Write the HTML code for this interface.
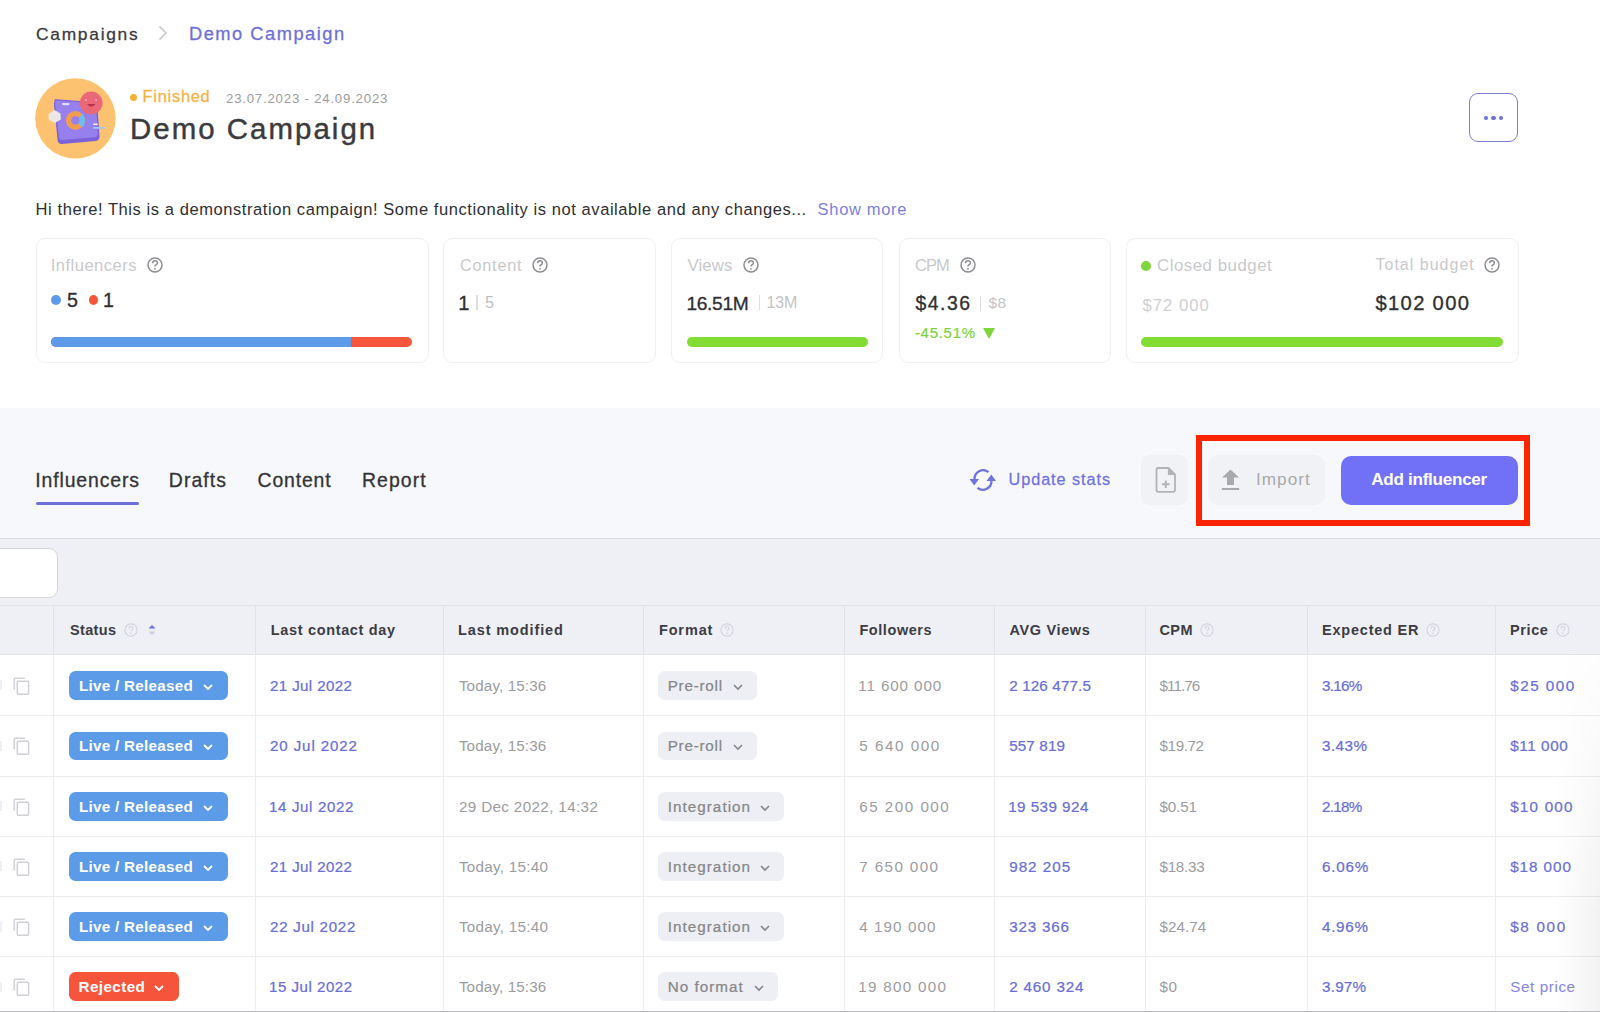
<!DOCTYPE html>
<html><head><meta charset="utf-8">
<style>
html,body{margin:0;padding:0;width:1600px;height:1012px;overflow:hidden;background:#fff;}
body{position:relative;font-family:"Liberation Sans",sans-serif;}
.t{position:absolute;white-space:nowrap;line-height:1;}
.a{position:absolute;box-sizing:border-box;}
svg{position:absolute;overflow:visible;}
</style></head><body>
<svg style="left:35px;top:78px" width="81" height="81" viewBox="0 0 81 81">
<circle cx="40.4" cy="40.4" r="40.2" fill="#fdc26f"/>
<path d="M20 23 Q18 21.5 21 21.3 L58 24 Q62 24.4 62.4 28.5 L64.5 58 Q64.8 62.5 60.5 63 L27 66 Q23 66.3 22.6 62 L19 27 Q18.7 23.5 20 23Z" fill="#7c62d6"/>
<path d="M21.5 22.5 L57.5 25 Q61 25.3 61.2 29 L62.6 55.5 Q62.8 59 59.3 59.3 L27.5 62 Q24.3 62.2 24 59 L20.3 26.5 Q20 22.4 21.5 22.5Z" fill="#9580ee"/>
<circle cx="40.4" cy="42.4" r="6.8" fill="none" stroke="#f39b4f" stroke-width="5.4"/>
<path d="M45.5 37.8 A6.8 6.8 0 0 1 45 47.5" fill="none" stroke="#6cc0ea" stroke-width="5.4"/>
<polygon points="13.5,36 19.6,32 25.5,35.5 25.8,41.5 19.8,45 13.8,41.8" fill="#ece7e6"/>
<circle cx="56.2" cy="25" r="11.4" fill="#ea6878"/>
<path d="M52 26 Q56.2 31.5 60.4 26Z" fill="#b43350"/>
<circle cx="51" cy="22" r="0.9" fill="#f7b0b8"/><circle cx="61" cy="22" r="0.9" fill="#f7b0b8"/>
<rect x="27" y="25" width="7.5" height="2.2" rx="1.1" fill="#e4dcff"/>
<rect x="58" y="49" width="12" height="1.8" rx="0.9" fill="#9ec8f0"/>
<rect x="58" y="45.5" width="5" height="1.5" rx="0.7" fill="#f7efe0"/>
</svg>
<div class="a" style="left:130px;top:93.5px;width:7px;height:7px;border-radius:50%;background:#f5b135"></div>
<div class="a" style="left:1469px;top:93px;width:49px;height:49px;border:1.5px solid #7a7ed8;border-radius:9px"></div>
<div class="a" style="left:1483.8px;top:116.1px;width:4.4px;height:4.4px;border-radius:50%;background:#6b6fd8"></div>
<div class="a" style="left:1491.3px;top:116.1px;width:4.4px;height:4.4px;border-radius:50%;background:#6b6fd8"></div>
<div class="a" style="left:1498.8px;top:116.1px;width:4.4px;height:4.4px;border-radius:50%;background:#6b6fd8"></div>
<svg style="left:157px;top:25px" width="12" height="16" viewBox="0 0 12 16"><path d="M2.5 1.5 L9 8 L2.5 14.5" fill="none" stroke="#c5c5cc" stroke-width="1.6"/></svg>
<div class="a" style="left:35.5px;top:237.5px;width:393.0px;height:125px;border:1px solid #f0f0f2;border-radius:9px"></div>
<div class="a" style="left:443px;top:237.5px;width:212.5px;height:125px;border:1px solid #f0f0f2;border-radius:9px"></div>
<div class="a" style="left:670.5px;top:237.5px;width:212.5px;height:125px;border:1px solid #f0f0f2;border-radius:9px"></div>
<div class="a" style="left:898.5px;top:237.5px;width:212.0px;height:125px;border:1px solid #f0f0f2;border-radius:9px"></div>
<div class="a" style="left:1126px;top:237.5px;width:392.5px;height:125px;border:1px solid #f0f0f2;border-radius:9px"></div>
<svg style="left:146.8px;top:257.0px" width="16" height="16" viewBox="0 0 16 16">
<circle cx="8" cy="8" r="7" fill="none" stroke="#8e8e92" stroke-width="1.5"/>
<path d="M5.6 6.2 Q5.6 3.8 8 3.8 Q10.4 3.8 10.4 6 Q10.4 7.3 8.8 8 Q8 8.4 8 9.6" fill="none" stroke="#8e8e92" stroke-width="1.5"/>
<circle cx="8" cy="11.8" r="0.9" fill="#8e8e92"/></svg>
<svg style="left:532.2px;top:257.0px" width="16" height="16" viewBox="0 0 16 16">
<circle cx="8" cy="8" r="7" fill="none" stroke="#8e8e92" stroke-width="1.5"/>
<path d="M5.6 6.2 Q5.6 3.8 8 3.8 Q10.4 3.8 10.4 6 Q10.4 7.3 8.8 8 Q8 8.4 8 9.6" fill="none" stroke="#8e8e92" stroke-width="1.5"/>
<circle cx="8" cy="11.8" r="0.9" fill="#8e8e92"/></svg>
<svg style="left:742.6px;top:257.0px" width="16" height="16" viewBox="0 0 16 16">
<circle cx="8" cy="8" r="7" fill="none" stroke="#8e8e92" stroke-width="1.5"/>
<path d="M5.6 6.2 Q5.6 3.8 8 3.8 Q10.4 3.8 10.4 6 Q10.4 7.3 8.8 8 Q8 8.4 8 9.6" fill="none" stroke="#8e8e92" stroke-width="1.5"/>
<circle cx="8" cy="11.8" r="0.9" fill="#8e8e92"/></svg>
<svg style="left:959.8px;top:257.0px" width="16" height="16" viewBox="0 0 16 16">
<circle cx="8" cy="8" r="7" fill="none" stroke="#8e8e92" stroke-width="1.5"/>
<path d="M5.6 6.2 Q5.6 3.8 8 3.8 Q10.4 3.8 10.4 6 Q10.4 7.3 8.8 8 Q8 8.4 8 9.6" fill="none" stroke="#8e8e92" stroke-width="1.5"/>
<circle cx="8" cy="11.8" r="0.9" fill="#8e8e92"/></svg>
<svg style="left:1484.4px;top:257.0px" width="16" height="16" viewBox="0 0 16 16">
<circle cx="8" cy="8" r="7" fill="none" stroke="#8e8e92" stroke-width="1.5"/>
<path d="M5.6 6.2 Q5.6 3.8 8 3.8 Q10.4 3.8 10.4 6 Q10.4 7.3 8.8 8 Q8 8.4 8 9.6" fill="none" stroke="#8e8e92" stroke-width="1.5"/>
<circle cx="8" cy="11.8" r="0.9" fill="#8e8e92"/></svg>
<div class="a" style="left:51px;top:295px;width:10px;height:10px;border-radius:50%;background:#5c9be7"></div>
<div class="a" style="left:88.5px;top:295px;width:9.5px;height:10px;border-radius:50%;background:#f5563b"></div>
<div class="a" style="left:1141px;top:260.5px;width:10px;height:10px;border-radius:50%;background:#7fd63a"></div>
<div class="a" style="left:476.25px;top:295px;width:1.5px;height:15px;background:#dedee0"></div>
<div class="a" style="left:758.85px;top:295px;width:1.5px;height:15px;background:#dedee0"></div>
<div class="a" style="left:979.85px;top:296px;width:1.5px;height:15px;background:#dedee0"></div>
<svg style="left:982.5px;top:328px" width="12" height="11" viewBox="0 0 12 11"><path d="M0 0 L12 0 L6 11Z" fill="#7ed43a"/></svg>
<div class="a" style="left:50.8px;top:336.5px;width:361.7px;height:10px;border-radius:5px;background:#f6573c;overflow:hidden"><div style="width:300.6px;height:10px;background:#5d9be8"></div></div>
<div class="a" style="left:687px;top:336.5px;width:180.5px;height:10px;border-radius:5px;background:#82dc34"></div>
<div class="a" style="left:1141px;top:336.5px;width:361.5px;height:10px;border-radius:5px;background:#82dc34"></div>
<div class="a" style="left:0;top:408px;width:1600px;height:130px;background:#f7f8fc"></div>
<div class="a" style="left:0;top:538px;width:1600px;height:1px;background:#dcdde2"></div>
<div class="a" style="left:0;top:539px;width:1600px;height:473px;background:#eff0f5"></div>
<div class="a" style="left:35.5px;top:502px;width:103px;height:3px;border-radius:1.5px;background:#6d70d8"></div>
<svg style="left:969px;top:469px" width="28" height="22" viewBox="0 0 28 22">
<path d="M19.5 3.2 A8.5 8.5 0 0 0 5.6 10.5" fill="none" stroke="#6f73db" stroke-width="2.3"/>
<path d="M0.5 10 L10 10 L5.2 16.5Z" fill="#6f73db"/>
<path d="M8.5 18.8 A8.5 8.5 0 0 0 22.4 11.5" fill="none" stroke="#6f73db" stroke-width="2.3"/>
<path d="M17.5 12 L27 12 L22.3 5.5Z" fill="#6f73db"/>
</svg>
<div class="a" style="left:1140.5px;top:455px;width:47px;height:49.5px;border-radius:9px;background:#f1f2f6"></div>
<svg style="left:1155px;top:467px" width="22" height="26" viewBox="0 0 22 26">
<path d="M2.5 1 L13.5 1 L20 7.5 L20 23 Q20 24.8 18.2 24.8 L3.3 24.8 Q1.5 24.8 1.5 23 L1.5 2.8 Q1.5 1 3.3 1Z" fill="none" stroke="#b3b3b6" stroke-width="1.8" stroke-linejoin="round"/>
<path d="M13.5 1 L13.5 7.5 L20 7.5" fill="#b3b3b6" stroke="#b3b3b6" stroke-width="1.2" stroke-linejoin="round"/>
<path d="M10.8 13.5 L10.8 21 M7 17.2 L14.6 17.2" stroke="#b3b3b6" stroke-width="2"/>
</svg>
<div class="a" style="left:1208px;top:455px;width:116.5px;height:49.5px;border-radius:10px;background:#f1f2f6"></div>
<svg style="left:1221px;top:469px" width="19" height="22" viewBox="0 0 19 22">
<path d="M9.5 0.5 L18 8.5 L13 8.5 L13 16 L6 16 L6 8.5 L1 8.5Z" fill="#a9a9ac"/>
<rect x="0.8" y="19" width="17.4" height="2" fill="#a9a9ac"/>
</svg>
<div class="a" style="left:1341px;top:455.7px;width:177px;height:49px;border-radius:10px;background:#7071f7"></div>
<div class="a" style="left:1196px;top:434.5px;width:334px;height:91px;border:6.6px solid #fb2400"></div>
<div class="a" style="left:-10px;top:548px;width:67.5px;height:50px;border:1.2px solid #d6d7dc;border-radius:9px;background:#fff"></div>
<div class="a" style="left:0;top:605px;width:1600px;height:1px;background:#e3e4e9"></div>
<div class="a" style="left:0;top:654px;width:1600px;height:358px;background:#fff"></div>
<div class="a" style="left:0;top:653.5px;width:1600px;height:1px;background:#e2e3e8"></div>
<div class="a" style="left:53.0px;top:606px;width:1px;height:48px;background:#e2e3e8"></div>
<div class="a" style="left:53.0px;top:654px;width:1px;height:357px;background:#ededf0"></div>
<div class="a" style="left:254.5px;top:606px;width:1px;height:48px;background:#e2e3e8"></div>
<div class="a" style="left:254.5px;top:654px;width:1px;height:357px;background:#ededf0"></div>
<div class="a" style="left:443.0px;top:606px;width:1px;height:48px;background:#e2e3e8"></div>
<div class="a" style="left:443.0px;top:654px;width:1px;height:357px;background:#ededf0"></div>
<div class="a" style="left:643.0px;top:606px;width:1px;height:48px;background:#e2e3e8"></div>
<div class="a" style="left:643.0px;top:654px;width:1px;height:357px;background:#ededf0"></div>
<div class="a" style="left:843.5px;top:606px;width:1px;height:48px;background:#e2e3e8"></div>
<div class="a" style="left:843.5px;top:654px;width:1px;height:357px;background:#ededf0"></div>
<div class="a" style="left:994.0px;top:606px;width:1px;height:48px;background:#e2e3e8"></div>
<div class="a" style="left:994.0px;top:654px;width:1px;height:357px;background:#ededf0"></div>
<div class="a" style="left:1144.5px;top:606px;width:1px;height:48px;background:#e2e3e8"></div>
<div class="a" style="left:1144.5px;top:654px;width:1px;height:357px;background:#ededf0"></div>
<div class="a" style="left:1307.0px;top:606px;width:1px;height:48px;background:#e2e3e8"></div>
<div class="a" style="left:1307.0px;top:654px;width:1px;height:357px;background:#ededf0"></div>
<div class="a" style="left:1495.0px;top:606px;width:1px;height:48px;background:#e2e3e8"></div>
<div class="a" style="left:1495.0px;top:654px;width:1px;height:357px;background:#ededf0"></div>
<div class="a" style="left:0;top:715.0px;width:1600px;height:1px;background:#ededf0"></div>
<div class="a" style="left:0;top:775.5px;width:1600px;height:1px;background:#ededf0"></div>
<div class="a" style="left:0;top:835.8px;width:1600px;height:1px;background:#ededf0"></div>
<div class="a" style="left:0;top:896.0px;width:1600px;height:1px;background:#ededf0"></div>
<div class="a" style="left:0;top:956.0px;width:1600px;height:1px;background:#ededf0"></div>
<div class="a" style="left:0;top:1011px;width:1600px;height:1px;background:#b9b9bb"></div>
<svg style="left:123.5px;top:623px" width="14" height="14" viewBox="0 0 16 16">
<circle cx="8" cy="8" r="7" fill="none" stroke="#d3d4de" stroke-width="1.3"/>
<path d="M5.8 6.2 Q5.8 4 8 4 Q10.2 4 10.2 6 Q10.2 7.2 8.8 7.9 Q8 8.3 8 9.5" fill="none" stroke="#d3d4de" stroke-width="1.3"/>
<circle cx="8" cy="11.8" r="0.9" fill="#d3d4de"/></svg>
<svg style="left:148px;top:625px" width="8" height="10" viewBox="0 0 8 10"><path d="M0.5 3.5 L4 0 L7.5 3.5Z" fill="#6d70d8"/><path d="M0.5 6.5 L4 10 L7.5 6.5Z" fill="#cdcde0"/></svg>
<svg style="left:720px;top:623px" width="14" height="14" viewBox="0 0 16 16">
<circle cx="8" cy="8" r="7" fill="none" stroke="#d3d4de" stroke-width="1.3"/>
<path d="M5.8 6.2 Q5.8 4 8 4 Q10.2 4 10.2 6 Q10.2 7.2 8.8 7.9 Q8 8.3 8 9.5" fill="none" stroke="#d3d4de" stroke-width="1.3"/>
<circle cx="8" cy="11.8" r="0.9" fill="#d3d4de"/></svg>
<svg style="left:1200px;top:623px" width="14" height="14" viewBox="0 0 16 16">
<circle cx="8" cy="8" r="7" fill="none" stroke="#d3d4de" stroke-width="1.3"/>
<path d="M5.8 6.2 Q5.8 4 8 4 Q10.2 4 10.2 6 Q10.2 7.2 8.8 7.9 Q8 8.3 8 9.5" fill="none" stroke="#d3d4de" stroke-width="1.3"/>
<circle cx="8" cy="11.8" r="0.9" fill="#d3d4de"/></svg>
<svg style="left:1426px;top:623px" width="14" height="14" viewBox="0 0 16 16">
<circle cx="8" cy="8" r="7" fill="none" stroke="#d3d4de" stroke-width="1.3"/>
<path d="M5.8 6.2 Q5.8 4 8 4 Q10.2 4 10.2 6 Q10.2 7.2 8.8 7.9 Q8 8.3 8 9.5" fill="none" stroke="#d3d4de" stroke-width="1.3"/>
<circle cx="8" cy="11.8" r="0.9" fill="#d3d4de"/></svg>
<svg style="left:1556px;top:623px" width="14" height="14" viewBox="0 0 16 16">
<circle cx="8" cy="8" r="7" fill="none" stroke="#d3d4de" stroke-width="1.3"/>
<path d="M5.8 6.2 Q5.8 4 8 4 Q10.2 4 10.2 6 Q10.2 7.2 8.8 7.9 Q8 8.3 8 9.5" fill="none" stroke="#d3d4de" stroke-width="1.3"/>
<circle cx="8" cy="11.8" r="0.9" fill="#d3d4de"/></svg>
<svg style="left:13px;top:676.9000000000001px" width="17" height="18" viewBox="0 0 17 18">
<path d="M1.3 12.5 L1.3 2.2 Q1.3 1.3 2.2 1.3 L11.8 1.3" fill="none" stroke="#d2d3d8" stroke-width="1.6"/>
<rect x="4.3" y="4.3" width="11.3" height="13" rx="1.2" fill="none" stroke="#cfd0d5" stroke-width="1.5"/></svg>
<div class="a" style="left:0px;top:680.2px;width:2px;height:10px;background:#f0f0f2"></div>
<div class="a" style="left:69.4px;top:671.0px;width:159px;height:28.8px;border-radius:6.5px;background:#5b9be7"></div>
<svg style="left:203.3px;top:683.7px" width="10" height="7" viewBox="0 0 10 7"><path d="M1 1 L5 5 L9 1" fill="none" stroke="#fff" stroke-width="1.8"/></svg>
<div class="a" style="left:658px;top:671.0px;width:99px;height:28.8px;border-radius:6.5px;background:#eeeff4"></div>
<svg style="left:732.5px;top:683.7px" width="10" height="7" viewBox="0 0 10 7"><path d="M1 1 L5 5 L9 1" fill="none" stroke="#86868a" stroke-width="1.6"/></svg>
<svg style="left:13px;top:737.4000000000001px" width="17" height="18" viewBox="0 0 17 18">
<path d="M1.3 12.5 L1.3 2.2 Q1.3 1.3 2.2 1.3 L11.8 1.3" fill="none" stroke="#d2d3d8" stroke-width="1.6"/>
<rect x="4.3" y="4.3" width="11.3" height="13" rx="1.2" fill="none" stroke="#cfd0d5" stroke-width="1.5"/></svg>
<div class="a" style="left:0px;top:740.7px;width:2px;height:10px;background:#f0f0f2"></div>
<div class="a" style="left:69.4px;top:731.5px;width:159px;height:28.8px;border-radius:6.5px;background:#5b9be7"></div>
<svg style="left:203.3px;top:744.2px" width="10" height="7" viewBox="0 0 10 7"><path d="M1 1 L5 5 L9 1" fill="none" stroke="#fff" stroke-width="1.8"/></svg>
<div class="a" style="left:658px;top:731.5px;width:99px;height:28.8px;border-radius:6.5px;background:#eeeff4"></div>
<svg style="left:732.5px;top:744.2px" width="10" height="7" viewBox="0 0 10 7"><path d="M1 1 L5 5 L9 1" fill="none" stroke="#86868a" stroke-width="1.6"/></svg>
<svg style="left:13px;top:797.7px" width="17" height="18" viewBox="0 0 17 18">
<path d="M1.3 12.5 L1.3 2.2 Q1.3 1.3 2.2 1.3 L11.8 1.3" fill="none" stroke="#d2d3d8" stroke-width="1.6"/>
<rect x="4.3" y="4.3" width="11.3" height="13" rx="1.2" fill="none" stroke="#cfd0d5" stroke-width="1.5"/></svg>
<div class="a" style="left:0px;top:801px;width:2px;height:10px;background:#f0f0f2"></div>
<div class="a" style="left:69.4px;top:791.8px;width:159px;height:28.8px;border-radius:6.5px;background:#5b9be7"></div>
<svg style="left:203.3px;top:804.5px" width="10" height="7" viewBox="0 0 10 7"><path d="M1 1 L5 5 L9 1" fill="none" stroke="#fff" stroke-width="1.8"/></svg>
<div class="a" style="left:658px;top:791.8px;width:126px;height:28.8px;border-radius:6.5px;background:#eeeff4"></div>
<svg style="left:759.5px;top:804.5px" width="10" height="7" viewBox="0 0 10 7"><path d="M1 1 L5 5 L9 1" fill="none" stroke="#86868a" stroke-width="1.6"/></svg>
<svg style="left:13px;top:858.0px" width="17" height="18" viewBox="0 0 17 18">
<path d="M1.3 12.5 L1.3 2.2 Q1.3 1.3 2.2 1.3 L11.8 1.3" fill="none" stroke="#d2d3d8" stroke-width="1.6"/>
<rect x="4.3" y="4.3" width="11.3" height="13" rx="1.2" fill="none" stroke="#cfd0d5" stroke-width="1.5"/></svg>
<div class="a" style="left:0px;top:861.3px;width:2px;height:10px;background:#f0f0f2"></div>
<div class="a" style="left:69.4px;top:852.0999999999999px;width:159px;height:28.8px;border-radius:6.5px;background:#5b9be7"></div>
<svg style="left:203.3px;top:864.8px" width="10" height="7" viewBox="0 0 10 7"><path d="M1 1 L5 5 L9 1" fill="none" stroke="#fff" stroke-width="1.8"/></svg>
<div class="a" style="left:658px;top:852.0999999999999px;width:126px;height:28.8px;border-radius:6.5px;background:#eeeff4"></div>
<svg style="left:759.5px;top:864.8px" width="10" height="7" viewBox="0 0 10 7"><path d="M1 1 L5 5 L9 1" fill="none" stroke="#86868a" stroke-width="1.6"/></svg>
<svg style="left:13px;top:918.2px" width="17" height="18" viewBox="0 0 17 18">
<path d="M1.3 12.5 L1.3 2.2 Q1.3 1.3 2.2 1.3 L11.8 1.3" fill="none" stroke="#d2d3d8" stroke-width="1.6"/>
<rect x="4.3" y="4.3" width="11.3" height="13" rx="1.2" fill="none" stroke="#cfd0d5" stroke-width="1.5"/></svg>
<div class="a" style="left:0px;top:921.5px;width:2px;height:10px;background:#f0f0f2"></div>
<div class="a" style="left:69.4px;top:912.3px;width:159px;height:28.8px;border-radius:6.5px;background:#5b9be7"></div>
<svg style="left:203.3px;top:925.0px" width="10" height="7" viewBox="0 0 10 7"><path d="M1 1 L5 5 L9 1" fill="none" stroke="#fff" stroke-width="1.8"/></svg>
<div class="a" style="left:658px;top:912.3px;width:126px;height:28.8px;border-radius:6.5px;background:#eeeff4"></div>
<svg style="left:759.5px;top:925.0px" width="10" height="7" viewBox="0 0 10 7"><path d="M1 1 L5 5 L9 1" fill="none" stroke="#86868a" stroke-width="1.6"/></svg>
<svg style="left:13px;top:978.2px" width="17" height="18" viewBox="0 0 17 18">
<path d="M1.3 12.5 L1.3 2.2 Q1.3 1.3 2.2 1.3 L11.8 1.3" fill="none" stroke="#d2d3d8" stroke-width="1.6"/>
<rect x="4.3" y="4.3" width="11.3" height="13" rx="1.2" fill="none" stroke="#cfd0d5" stroke-width="1.5"/></svg>
<div class="a" style="left:0px;top:981.5px;width:2px;height:10px;background:#f0f0f2"></div>
<div class="a" style="left:69px;top:972.3px;width:110px;height:28.8px;border-radius:6.5px;background:#f7553b"></div>
<svg style="left:154px;top:985.0px" width="10" height="7" viewBox="0 0 10 7"><path d="M1 1 L5 5 L9 1" fill="none" stroke="#fff" stroke-width="1.8"/></svg>
<div class="a" style="left:658px;top:972.3px;width:120px;height:28.8px;border-radius:6.5px;background:#eeeff4"></div>
<svg style="left:753.5px;top:985.0px" width="10" height="7" viewBox="0 0 10 7"><path d="M1 1 L5 5 L9 1" fill="none" stroke="#86868a" stroke-width="1.6"/></svg>
<div class="a" style="left:1555px;top:654px;width:45px;height:357px;background:linear-gradient(to right,rgba(0,0,0,0),rgba(0,0,0,0.05));-webkit-mask-image:linear-gradient(to bottom,rgba(0,0,0,0.1),#000 75%)"></div>
<div class="t" style="left:36.00px;top:24px;font-size:17.39px;line-height:20px;font-weight:500;color:#3a3a3c;letter-spacing:1.725px;font-weight:400;-webkit-text-stroke:0.28px #3a3a3c;">Campaigns</div>
<div class="t" style="left:189.00px;top:23px;font-size:18.26px;line-height:21px;font-weight:500;color:#6d70d8;letter-spacing:1.518px;font-weight:400;-webkit-text-stroke:0.29px #6d70d8;">Demo Campaign</div>
<div class="t" style="left:142.60px;top:87px;font-size:16.38px;line-height:18px;font-weight:500;color:#f3b33f;letter-spacing:0.752px;font-weight:400;-webkit-text-stroke:0.26px #f3b33f;">Finished</div>
<div class="t" style="left:226.00px;top:91px;font-size:13.19px;line-height:15px;font-weight:400;color:#9d9d9f;letter-spacing:0.801px;">23.07.2023 - 24.09.2023</div>
<div class="t" style="left:130.00px;top:112px;font-size:29.42px;line-height:33px;font-weight:500;color:#3b3b3d;letter-spacing:2.042px;font-weight:400;-webkit-text-stroke:0.45px #3b3b3d;">Demo Campaign</div>
<div class="t" style="left:35.60px;top:200px;font-size:16.52px;line-height:19px;font-weight:400;color:#2e2e30;letter-spacing:0.565px;">Hi there! This is a demonstration campaign! Some functionality is not available and any changes...</div>
<div class="t" style="left:817.60px;top:200px;font-size:16.52px;line-height:19px;font-weight:400;color:#7b7fdc;letter-spacing:0.669px;">Show more</div>
<div class="t" style="left:50.80px;top:256px;font-size:16.52px;line-height:19px;font-weight:400;color:#c9c9cb;letter-spacing:0.487px;">Influencers</div>
<div class="t" style="left:460.00px;top:256px;font-size:16.23px;line-height:18px;font-weight:400;color:#c9c9cb;letter-spacing:0.783px;">Content</div>
<div class="t" style="left:687.40px;top:256px;font-size:16.81px;line-height:19px;font-weight:400;color:#c9c9cb;letter-spacing:0.124px;">Views</div>
<div class="t" style="left:914.90px;top:256px;font-size:16.52px;line-height:19px;font-weight:400;color:#c9c9cb;letter-spacing:-0.921px;">CPM</div>
<div class="t" style="left:1157.00px;top:256px;font-size:16.81px;line-height:19px;font-weight:400;color:#c9c9cb;letter-spacing:0.528px;">Closed budget</div>
<div class="t" style="left:1375.50px;top:256px;font-size:15.94px;line-height:17px;font-weight:400;color:#c9c9cb;letter-spacing:1.035px;">Total budget</div>
<div class="t" style="left:67.00px;top:289px;font-size:19.71px;line-height:22px;font-weight:500;color:#2f2f31;font-weight:400;-webkit-text-stroke:0.32px #2f2f31;">5</div>
<div class="t" style="left:102.90px;top:289px;font-size:19.71px;line-height:22px;font-weight:500;color:#2f2f31;font-weight:400;-webkit-text-stroke:0.32px #2f2f31;">1</div>
<div class="t" style="left:458.30px;top:292px;font-size:20.14px;line-height:22px;font-weight:500;color:#2f2f31;font-weight:400;-webkit-text-stroke:0.32px #2f2f31;">1</div>
<div class="t" style="left:485.30px;top:294px;font-size:15.65px;line-height:17px;font-weight:400;color:#bdbdbf;">5</div>
<div class="t" style="left:686.40px;top:293px;font-size:19.20px;line-height:21px;font-weight:500;color:#2f2f31;letter-spacing:-0.323px;font-weight:400;-webkit-text-stroke:0.31px #2f2f31;">16.51M</div>
<div class="t" style="left:766.50px;top:294px;font-size:15.94px;line-height:17px;font-weight:400;color:#c4c4c6;letter-spacing:-0.164px;">13M</div>
<div class="t" style="left:915.40px;top:292px;font-size:19.42px;line-height:22px;font-weight:500;color:#2f2f31;letter-spacing:1.507px;font-weight:400;-webkit-text-stroke:0.31px #2f2f31;">$4.36</div>
<div class="t" style="left:988.50px;top:294px;font-size:15.50px;line-height:17px;font-weight:400;color:#c4c4c6;letter-spacing:0.400px;">$8</div>
<div class="t" style="left:914.90px;top:324px;font-size:15.07px;line-height:17px;font-weight:500;color:#7fd23f;letter-spacing:0.682px;font-weight:400;-webkit-text-stroke:0.24px #7fd23f;">-45.51%</div>
<div class="t" style="left:1142.50px;top:296px;font-size:16.67px;line-height:19px;font-weight:400;color:#d0d0d2;letter-spacing:1.009px;">$72 000</div>
<div class="t" style="left:1375.50px;top:292px;font-size:20.20px;line-height:22px;font-weight:500;color:#2f2f31;letter-spacing:1.318px;font-weight:400;-webkit-text-stroke:0.32px #2f2f31;">$102 000</div>
<div class="t" style="left:35.30px;top:469px;font-size:19.42px;line-height:22px;font-weight:500;color:#343436;letter-spacing:0.878px;font-weight:400;-webkit-text-stroke:0.31px #343436;">Influencers</div>
<div class="t" style="left:168.80px;top:469px;font-size:19.42px;line-height:22px;font-weight:500;color:#343436;letter-spacing:1.089px;font-weight:400;-webkit-text-stroke:0.31px #343436;">Drafts</div>
<div class="t" style="left:257.50px;top:469px;font-size:19.42px;line-height:22px;font-weight:500;color:#343436;letter-spacing:0.862px;font-weight:400;-webkit-text-stroke:0.31px #343436;">Content</div>
<div class="t" style="left:362.00px;top:469px;font-size:19.42px;line-height:22px;font-weight:500;color:#343436;letter-spacing:1.079px;font-weight:400;-webkit-text-stroke:0.31px #343436;">Report</div>
<div class="t" style="left:1008.50px;top:470px;font-size:16.23px;line-height:18px;font-weight:500;color:#6f73db;letter-spacing:0.959px;font-weight:400;-webkit-text-stroke:0.26px #6f73db;">Update stats</div>
<div class="t" style="left:1256.00px;top:469px;font-size:17.20px;line-height:20px;font-weight:400;color:#a9a9ab;letter-spacing:1.013px;">Import</div>
<div class="t" style="left:1371.20px;top:470px;font-size:17.10px;line-height:19px;font-weight:700;color:#ffffff;letter-spacing:-0.278px;">Add influencer</div>
<div class="t" style="left:70.00px;top:622px;font-size:14.49px;line-height:16px;font-weight:700;color:#3c3c42;letter-spacing:0.358px;">Status</div>
<div class="t" style="left:270.80px;top:622px;font-size:14.49px;line-height:16px;font-weight:700;color:#3c3c42;letter-spacing:0.664px;">Last contact day</div>
<div class="t" style="left:458.10px;top:622px;font-size:14.49px;line-height:16px;font-weight:700;color:#3c3c42;letter-spacing:0.883px;">Last modified</div>
<div class="t" style="left:658.90px;top:622px;font-size:14.49px;line-height:16px;font-weight:700;color:#3c3c42;letter-spacing:0.887px;">Format</div>
<div class="t" style="left:859.40px;top:622px;font-size:14.49px;line-height:16px;font-weight:700;color:#3c3c42;letter-spacing:0.581px;">Followers</div>
<div class="t" style="left:1009.40px;top:622px;font-size:14.49px;line-height:16px;font-weight:700;color:#3c3c42;letter-spacing:0.665px;">AVG Views</div>
<div class="t" style="left:1159.50px;top:622px;font-size:14.49px;line-height:16px;font-weight:700;color:#3c3c42;letter-spacing:0.389px;">CPM</div>
<div class="t" style="left:1322.00px;top:622px;font-size:14.49px;line-height:16px;font-weight:700;color:#3c3c42;letter-spacing:0.791px;">Expected ER</div>
<div class="t" style="left:1510.00px;top:622px;font-size:14.49px;line-height:16px;font-weight:700;color:#3c3c42;letter-spacing:0.606px;">Price</div>
<div class="t" style="left:78.90px;top:677px;font-size:15.22px;line-height:17px;font-weight:700;color:#fff;letter-spacing:0.273px;">Live / Released</div>
<div class="t" style="left:270.00px;top:677px;font-size:15.07px;line-height:17px;font-weight:500;color:#6a6ed5;letter-spacing:0.399px;font-weight:400;-webkit-text-stroke:0.24px #6a6ed5;">21 Jul 2022</div>
<div class="t" style="left:458.90px;top:677px;font-size:15.22px;line-height:17px;font-weight:400;color:#9c9c9e;letter-spacing:0.122px;">Today, 15:36</div>
<div class="t" style="left:667.70px;top:677px;font-size:15.22px;line-height:17px;font-weight:500;color:#868688;letter-spacing:0.762px;font-weight:400;-webkit-text-stroke:0.24px #868688;">Pre-roll</div>
<div class="t" style="left:858.20px;top:677px;font-size:15.22px;line-height:17px;font-weight:400;color:#9c9c9e;letter-spacing:0.892px;">11 600 000</div>
<div class="t" style="left:1009.20px;top:677px;font-size:15.22px;line-height:17px;font-weight:500;color:#6a6ed5;letter-spacing:0.137px;font-weight:400;-webkit-text-stroke:0.24px #6a6ed5;">2 126 477.5</div>
<div class="t" style="left:1159.50px;top:677px;font-size:15.22px;line-height:17px;font-weight:400;color:#9c9c9e;letter-spacing:-0.931px;">$11.76</div>
<div class="t" style="left:1322.00px;top:677px;font-size:15.22px;line-height:17px;font-weight:500;color:#6a6ed5;letter-spacing:-0.705px;font-weight:400;-webkit-text-stroke:0.24px #6a6ed5;">3.16%</div>
<div class="t" style="left:1510.20px;top:677px;font-size:15.22px;line-height:17px;font-weight:500;color:#6a6ed5;letter-spacing:1.509px;font-weight:400;-webkit-text-stroke:0.24px #6a6ed5;">$25 000</div>
<div class="t" style="left:78.90px;top:737px;font-size:15.22px;line-height:17px;font-weight:700;color:#fff;letter-spacing:0.273px;">Live / Released</div>
<div class="t" style="left:270.00px;top:737px;font-size:15.07px;line-height:17px;font-weight:500;color:#6a6ed5;letter-spacing:0.909px;font-weight:400;-webkit-text-stroke:0.24px #6a6ed5;">20 Jul 2022</div>
<div class="t" style="left:458.90px;top:737px;font-size:15.22px;line-height:17px;font-weight:400;color:#9c9c9e;letter-spacing:0.122px;">Today, 15:36</div>
<div class="t" style="left:667.70px;top:737px;font-size:15.22px;line-height:17px;font-weight:500;color:#868688;letter-spacing:0.762px;font-weight:400;-webkit-text-stroke:0.24px #868688;">Pre-roll</div>
<div class="t" style="left:859.20px;top:737px;font-size:15.22px;line-height:17px;font-weight:400;color:#9c9c9e;letter-spacing:1.532px;">5 640 000</div>
<div class="t" style="left:1009.20px;top:737px;font-size:15.22px;line-height:17px;font-weight:500;color:#6a6ed5;letter-spacing:0.125px;font-weight:400;-webkit-text-stroke:0.24px #6a6ed5;">557 819</div>
<div class="t" style="left:1159.50px;top:737px;font-size:15.22px;line-height:17px;font-weight:400;color:#9c9c9e;letter-spacing:-0.397px;">$19.72</div>
<div class="t" style="left:1322.00px;top:737px;font-size:15.22px;line-height:17px;font-weight:500;color:#6a6ed5;letter-spacing:0.445px;font-weight:400;-webkit-text-stroke:0.24px #6a6ed5;">3.43%</div>
<div class="t" style="left:1510.20px;top:737px;font-size:15.22px;line-height:17px;font-weight:500;color:#6a6ed5;letter-spacing:0.597px;font-weight:400;-webkit-text-stroke:0.24px #6a6ed5;">$11 000</div>
<div class="t" style="left:78.90px;top:798px;font-size:15.22px;line-height:17px;font-weight:700;color:#fff;letter-spacing:0.273px;">Live / Released</div>
<div class="t" style="left:269.00px;top:798px;font-size:15.07px;line-height:17px;font-weight:500;color:#6a6ed5;letter-spacing:0.649px;font-weight:400;-webkit-text-stroke:0.24px #6a6ed5;">14 Jul 2022</div>
<div class="t" style="left:458.90px;top:798px;font-size:15.22px;line-height:17px;font-weight:400;color:#9c9c9e;letter-spacing:0.360px;">29 Dec 2022, 14:32</div>
<div class="t" style="left:667.70px;top:798px;font-size:15.22px;line-height:17px;font-weight:500;color:#868688;letter-spacing:1.045px;font-weight:400;-webkit-text-stroke:0.24px #868688;">Integration</div>
<div class="t" style="left:859.20px;top:798px;font-size:15.22px;line-height:17px;font-weight:400;color:#9c9c9e;letter-spacing:1.488px;">65 200 000</div>
<div class="t" style="left:1008.20px;top:798px;font-size:15.22px;line-height:17px;font-weight:500;color:#6a6ed5;letter-spacing:0.444px;font-weight:400;-webkit-text-stroke:0.24px #6a6ed5;">19 539 924</div>
<div class="t" style="left:1159.50px;top:798px;font-size:15.22px;line-height:17px;font-weight:400;color:#9c9c9e;letter-spacing:-0.155px;">$0.51</div>
<div class="t" style="left:1322.00px;top:798px;font-size:15.22px;line-height:17px;font-weight:500;color:#6a6ed5;letter-spacing:-0.705px;font-weight:400;-webkit-text-stroke:0.24px #6a6ed5;">2.18%</div>
<div class="t" style="left:1510.20px;top:798px;font-size:15.22px;line-height:17px;font-weight:500;color:#6a6ed5;letter-spacing:1.209px;font-weight:400;-webkit-text-stroke:0.24px #6a6ed5;">$10 000</div>
<div class="t" style="left:78.90px;top:858px;font-size:15.22px;line-height:17px;font-weight:700;color:#fff;letter-spacing:0.273px;">Live / Released</div>
<div class="t" style="left:270.00px;top:858px;font-size:15.07px;line-height:17px;font-weight:500;color:#6a6ed5;letter-spacing:0.399px;font-weight:400;-webkit-text-stroke:0.24px #6a6ed5;">21 Jul 2022</div>
<div class="t" style="left:458.90px;top:858px;font-size:15.22px;line-height:17px;font-weight:400;color:#9c9c9e;letter-spacing:0.286px;">Today, 15:40</div>
<div class="t" style="left:667.70px;top:858px;font-size:15.22px;line-height:17px;font-weight:500;color:#868688;letter-spacing:1.045px;font-weight:400;-webkit-text-stroke:0.24px #868688;">Integration</div>
<div class="t" style="left:859.20px;top:858px;font-size:15.22px;line-height:17px;font-weight:400;color:#9c9c9e;letter-spacing:1.395px;">7 650 000</div>
<div class="t" style="left:1009.20px;top:858px;font-size:15.22px;line-height:17px;font-weight:500;color:#6a6ed5;letter-spacing:0.992px;font-weight:400;-webkit-text-stroke:0.24px #6a6ed5;">982 205</div>
<div class="t" style="left:1159.50px;top:858px;font-size:15.22px;line-height:17px;font-weight:400;color:#9c9c9e;letter-spacing:-0.277px;">$18.33</div>
<div class="t" style="left:1322.00px;top:858px;font-size:15.22px;line-height:17px;font-weight:500;color:#6a6ed5;letter-spacing:0.770px;font-weight:400;-webkit-text-stroke:0.24px #6a6ed5;">6.06%</div>
<div class="t" style="left:1510.20px;top:858px;font-size:15.22px;line-height:17px;font-weight:500;color:#6a6ed5;letter-spacing:0.942px;font-weight:400;-webkit-text-stroke:0.24px #6a6ed5;">$18 000</div>
<div class="t" style="left:78.90px;top:918px;font-size:15.22px;line-height:17px;font-weight:700;color:#fff;letter-spacing:0.273px;">Live / Released</div>
<div class="t" style="left:270.00px;top:918px;font-size:15.07px;line-height:17px;font-weight:500;color:#6a6ed5;letter-spacing:0.749px;font-weight:400;-webkit-text-stroke:0.24px #6a6ed5;">22 Jul 2022</div>
<div class="t" style="left:458.90px;top:918px;font-size:15.22px;line-height:17px;font-weight:400;color:#9c9c9e;letter-spacing:0.286px;">Today, 15:40</div>
<div class="t" style="left:667.70px;top:918px;font-size:15.22px;line-height:17px;font-weight:500;color:#868688;letter-spacing:1.045px;font-weight:400;-webkit-text-stroke:0.24px #868688;">Integration</div>
<div class="t" style="left:859.20px;top:918px;font-size:15.22px;line-height:17px;font-weight:400;color:#9c9c9e;letter-spacing:1.070px;">4 190 000</div>
<div class="t" style="left:1009.20px;top:918px;font-size:15.22px;line-height:17px;font-weight:500;color:#6a6ed5;letter-spacing:0.792px;font-weight:400;-webkit-text-stroke:0.24px #6a6ed5;">323 366</div>
<div class="t" style="left:1159.50px;top:918px;font-size:15.22px;line-height:17px;font-weight:400;color:#9c9c9e;letter-spacing:0.043px;">$24.74</div>
<div class="t" style="left:1322.00px;top:918px;font-size:15.22px;line-height:17px;font-weight:500;color:#6a6ed5;letter-spacing:0.695px;font-weight:400;-webkit-text-stroke:0.24px #6a6ed5;">4.96%</div>
<div class="t" style="left:1510.20px;top:918px;font-size:15.22px;line-height:17px;font-weight:500;color:#6a6ed5;letter-spacing:1.683px;font-weight:400;-webkit-text-stroke:0.24px #6a6ed5;">$8 000</div>
<div class="t" style="left:78.60px;top:978px;font-size:15.22px;line-height:17px;font-weight:700;color:#fff;letter-spacing:0.394px;">Rejected</div>
<div class="t" style="left:269.00px;top:978px;font-size:15.07px;line-height:17px;font-weight:500;color:#6a6ed5;letter-spacing:0.519px;font-weight:400;-webkit-text-stroke:0.24px #6a6ed5;">15 Jul 2022</div>
<div class="t" style="left:458.90px;top:978px;font-size:15.22px;line-height:17px;font-weight:400;color:#9c9c9e;letter-spacing:0.122px;">Today, 15:36</div>
<div class="t" style="left:667.70px;top:978px;font-size:15.22px;line-height:17px;font-weight:500;color:#868688;letter-spacing:1.027px;font-weight:400;-webkit-text-stroke:0.24px #868688;">No format</div>
<div class="t" style="left:858.20px;top:978px;font-size:15.22px;line-height:17px;font-weight:400;color:#9c9c9e;letter-spacing:1.288px;">19 800 000</div>
<div class="t" style="left:1009.20px;top:978px;font-size:15.22px;line-height:17px;font-weight:500;color:#6a6ed5;letter-spacing:0.820px;font-weight:400;-webkit-text-stroke:0.24px #6a6ed5;">2 460 324</div>
<div class="t" style="left:1159.50px;top:978px;font-size:15.22px;line-height:17px;font-weight:400;color:#9c9c9e;letter-spacing:0.600px;">$0</div>
<div class="t" style="left:1322.00px;top:978px;font-size:15.22px;line-height:17px;font-weight:500;color:#6a6ed5;letter-spacing:0.220px;font-weight:400;-webkit-text-stroke:0.24px #6a6ed5;">3.97%</div>
<div class="t" style="left:1510.20px;top:978px;font-size:15.22px;line-height:17px;font-weight:400;color:#8386dc;letter-spacing:0.601px;">Set price</div>
</body></html>
